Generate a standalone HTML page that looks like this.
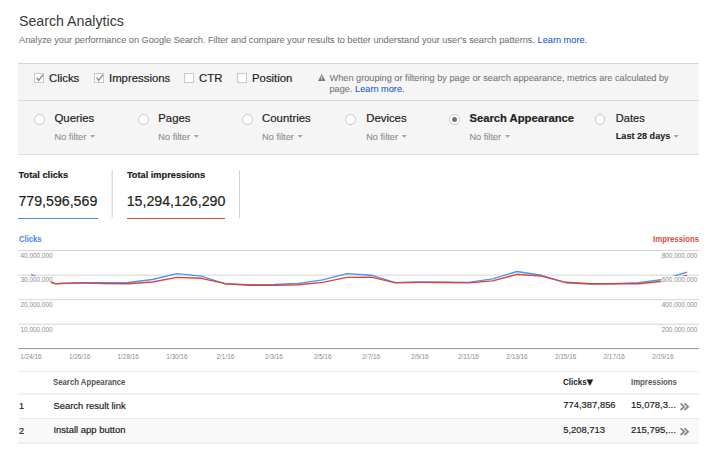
<!DOCTYPE html>
<html><head><meta charset="utf-8">
<style>
html,body{margin:0;padding:0;background:#fff;}
body{width:713px;height:470px;overflow:hidden;position:relative;font-family:"Liberation Sans",Arial,sans-serif;color:#222;}
.a{position:absolute;white-space:nowrap;line-height:1;}
.t{font-size:14.2px;color:#333;}
.sub{font-size:9.2px;color:#777;}
.lnk{color:#1958cf;}
.box{position:absolute;left:18.3px;top:62.8px;width:680.9px;height:90.5px;background:#f5f5f5;border-top:1px solid #d5d5d5;border-bottom:1px solid #e0e0e0;}
.hl{position:absolute;height:1px;background:#d8d8d8;}
.vl{position:absolute;width:1px;background:#d4d4d4;}
.lab{font-size:11.36px;color:#222;}
.nf{font-size:9.23px;color:#8a8a8a;}
.cb{position:absolute;width:8.2px;height:8.2px;border:0.8px solid #c8c8c8;background:#fff;border-radius:0.6px;}
.rd{position:absolute;width:8.8px;height:8.8px;border:0.9px solid #c6c6c6;background:#fff;border-radius:50%;}
.b{font-weight:bold;}
.lab,.t,.td{-webkit-text-stroke:0.18px currentColor;}
.sub,.nf{-webkit-text-stroke:0.08px currentColor;}
.td{font-size:9.23px;color:#222;}
.th{font-size:9.23px;font-weight:bold;color:#222;transform-origin:0 50%;transform:scaleX(0.845);}
.tri{position:absolute;width:5.2px;height:2.8px;background:#a4a4a4;clip-path:polygon(0 0,100% 0,50% 100%);}
</style></head><body>
<div class="a t" style="left:19px;top:13.6px;-webkit-text-stroke:0;color:#383838;">Search Analytics</div>
<div class="a sub" style="left:19px;top:36.1px;">Analyze your performance on Google Search. Filter and compare your results to better understand your user's search patterns. <span class="lnk">Learn more.</span></div>

<div class="box"></div>
<div class="hl" style="left:18.3px;top:99.8px;width:680.9px;"></div>

<div class="cb" style="left:34.3px;top:73.1px;"></div>
<svg class="a" style="left:34.3px;top:71.6px;" width="12" height="12" viewBox="0 0 12 12"><path d="M2.7 5.7 L4.6 8.4 L9.0 2.6" fill="none" stroke="#8c8c8c" stroke-width="1.45"/></svg>
<div class="a lab" style="left:49px;top:73px;">Clicks</div>
<div class="cb" style="left:94px;top:73.1px;"></div>
<svg class="a" style="left:94px;top:71.6px;" width="12" height="12" viewBox="0 0 12 12"><path d="M2.7 5.7 L4.6 8.4 L9.0 2.6" fill="none" stroke="#8c8c8c" stroke-width="1.45"/></svg>
<div class="a lab" style="left:109px;top:73px;">Impressions</div>
<div class="cb" style="left:184.3px;top:73.1px;"></div>
<div class="a lab" style="left:199px;top:73px;">CTR</div>
<div class="cb" style="left:237.2px;top:73.1px;"></div>
<div class="a lab" style="left:252px;top:73px;">Position</div>

<svg class="a" style="left:317.5px;top:73.7px;" width="7.5" height="7.1" viewBox="0 0 74 68"><path d="M37 0 L74 68 L0 68 Z" fill="#777"/><rect x="32" y="22" width="10" height="24" fill="#f5f5f5"/><rect x="32" y="51" width="10" height="9" fill="#f5f5f5"/></svg>
<div class="a sub" style="left:329.5px;top:72.75px;line-height:10.75px;">When grouping or filtering by page or search appearance, metrics are calculated by<br>page. <span class="lnk">Learn more.</span></div>

<div class="rd" style="left:34.2px;top:114.1px;"></div>
<div class="a lab" style="left:54.5px;top:113px;">Queries</div>
<div class="a nf" style="left:54.5px;top:132.75px;">No filter</div>
<div class="tri" style="left:90.0px;top:134.9px;"></div>

<div class="rd" style="left:138.0px;top:114.1px;"></div>
<div class="a lab" style="left:158.3px;top:113px;">Pages</div>
<div class="a nf" style="left:158.3px;top:132.75px;">No filter</div>
<div class="tri" style="left:193.8px;top:134.9px;"></div>

<div class="rd" style="left:241.8px;top:114.1px;"></div>
<div class="a lab" style="left:262.1px;top:113px;">Countries</div>
<div class="a nf" style="left:262.1px;top:132.75px;">No filter</div>
<div class="tri" style="left:297.6px;top:134.9px;"></div>

<div class="rd" style="left:345.3px;top:114.1px;"></div>
<div class="a lab" style="left:366.2px;top:113px;">Devices</div>
<div class="a nf" style="left:366.2px;top:132.75px;">No filter</div>
<div class="tri" style="left:401.7px;top:134.9px;"></div>

<div class="rd" style="left:449.0px;top:114.1px;"></div>
<div style="position:absolute;left:451.7px;top:116.8px;width:5.4px;height:5.4px;border-radius:50%;background:#707070;"></div>
<div class="a lab b" style="left:469.4px;top:113px;font-size:11.25px;">Search Appearance</div>
<div class="a nf" style="left:469.4px;top:132.75px;">No filter</div>
<div class="tri" style="left:505px;top:134.9px;"></div>

<div class="rd" style="left:594.7px;top:114.1px;"></div>
<div class="a lab" style="left:615.8px;top:113px;font-size:11.1px;">Dates</div>
<div class="a nf b" style="left:615.8px;top:131.7px;color:#222;font-size:9.08px;">Last 28 days</div>
<div class="tri" style="left:673.6px;top:134.9px;"></div>

<div class="a td b" style="left:18.6px;top:171.3px;">Total clicks</div>
<div class="a t" style="left:18.4px;top:194.2px;color:#222;">779,596,569</div>
<div class="hl" style="left:18.3px;top:217.8px;width:79.5px;background:#4d90fe;"></div>
<div class="vl" style="left:111px;top:170px;height:47.6px;width:2px;background:linear-gradient(90deg,#eee 50%,#dedede 50%);"></div>
<div class="a td b" style="left:126.9px;top:171.3px;">Total impressions</div>
<div class="a t" style="left:126.7px;top:194.2px;color:#222;">15,294,126,290</div>
<div class="hl" style="left:127px;top:217.8px;width:97.7px;background:#dd4b39;"></div>
<div class="vl" style="left:239px;top:170px;height:47.6px;"></div>

<div class="a b" style="left:18.8px;top:234.9px;font-size:8.5px;color:#4285f4;transform-origin:0 50%;transform:scaleX(0.9);">Clicks</div>
<div class="a b" style="right:13.8px;top:234.9px;font-size:8.5px;color:#dd4b39;transform-origin:100% 50%;transform:scaleX(0.92);">Impressions</div>
<svg class="a" style="left:0;top:225px;" width="713" height="145" viewBox="0 225 713 145">
<rect x="18.3" y="250.0" width="680.9" height="1" fill="#d4d4d4"/><rect x="18.3" y="274.62" width="680.9" height="1" fill="#d4d4d4"/><rect x="18.3" y="299.22" width="680.9" height="1" fill="#d4d4d4"/><rect x="18.3" y="323.7" width="680.9" height="1" fill="#d4d4d4"/>
<rect x="18.3" y="348.05" width="680.9" height="1" fill="#959595"/>
<polyline points="31.0,274.7 55.3,283.6 79.6,282.8 103.9,282.7 128.2,282.5 152.5,279.5 176.8,273.6 201.1,276.1 225.4,283.9 249.7,284.8 274.0,284.5 298.3,283.4 322.6,279.9 346.9,273.6 371.2,275.2 395.5,282.6 419.8,281.9 444.1,282.3 468.4,282.4 492.7,278.9 517.0,271.5 541.3,275.3 565.6,282.7 589.9,284.0 614.2,283.7 638.5,282.6 662.8,279.5 687.1,272.1" fill="none" stroke="#4d90fe" stroke-width="1.38" stroke-linejoin="round"/>
<polyline points="31.0,277.6 55.3,283.7 79.6,282.9 103.9,283.6 128.2,283.8 152.5,282.0 176.8,277.4 201.1,278.3 225.4,283.7 249.7,285.2 274.0,285.2 298.3,284.8 322.6,282.4 346.9,277.4 371.2,277.1 395.5,282.8 419.8,282.4 444.1,282.5 468.4,282.9 492.7,280.9 517.0,274.3 541.3,276.1 565.6,282.3 589.9,283.7 614.2,283.7 638.5,283.8 662.8,281.2 687.1,275.3" fill="none" stroke="#db4437" stroke-width="1.38" stroke-linejoin="round"/>
<g font-family="Liberation Sans, Arial, sans-serif" font-size="6.4" fill="#8a8a8a"><rect x="20" y="251.39999999999998" width="30.8" height="7.6" fill="#fff"/><text x="20.5" y="257.7">40,000,000</text><rect x="661.3" y="251.39999999999998" width="36.5" height="7.6" fill="#fff"/><text x="697.3" y="257.7" text-anchor="end">800,000,000</text><rect x="20" y="276.0" width="30.8" height="7.6" fill="#fff"/><text x="20.5" y="282.3">30,000,000</text><rect x="661.3" y="276.0" width="36.5" height="7.6" fill="#fff"/><text x="697.3" y="282.3" text-anchor="end">600,000,000</text><rect x="20" y="300.7" width="30.8" height="7.6" fill="#fff"/><text x="20.5" y="307.0">20,000,000</text><rect x="661.3" y="300.7" width="36.5" height="7.6" fill="#fff"/><text x="697.3" y="307.0" text-anchor="end">400,000,000</text><rect x="20" y="325.3" width="30.8" height="7.6" fill="#fff"/><text x="20.5" y="331.6">10,000,000</text><rect x="661.3" y="325.3" width="36.5" height="7.6" fill="#fff"/><text x="697.3" y="331.6" text-anchor="end">200,000,000</text><text x="31.0" y="358.6" text-anchor="middle">1/24/16</text><text x="79.6" y="358.6" text-anchor="middle">1/26/16</text><text x="128.2" y="358.6" text-anchor="middle">1/28/16</text><text x="176.8" y="358.6" text-anchor="middle">1/30/16</text><text x="225.4" y="358.6" text-anchor="middle">2/1/16</text><text x="274.0" y="358.6" text-anchor="middle">2/3/16</text><text x="322.6" y="358.6" text-anchor="middle">2/5/16</text><text x="371.2" y="358.6" text-anchor="middle">2/7/16</text><text x="419.8" y="358.6" text-anchor="middle">2/9/16</text><text x="468.4" y="358.6" text-anchor="middle">2/11/16</text><text x="517.0" y="358.6" text-anchor="middle">2/13/16</text><text x="565.6" y="358.6" text-anchor="middle">2/15/16</text><text x="614.2" y="358.6" text-anchor="middle">2/17/16</text><text x="662.8" y="358.6" text-anchor="middle">2/19/16</text></g>
</svg>

<div class="hl" style="left:18.3px;top:370.9px;width:680.9px;background:#ebebeb;"></div>
<div class="hl" style="left:18.3px;top:393px;height:2px;width:680.9px;background:#f2f2f2;"></div>
<div class="hl" style="left:18.3px;top:418px;width:680.9px;background:#ebebeb;"></div>
<div style="position:absolute;left:18.3px;top:419px;width:680.9px;height:23px;background:#f9f9f9;"></div>
<div class="hl" style="left:18.3px;top:442px;height:2px;width:680.9px;background:#f0f0f0;"></div>

<div class="a th" style="left:53.2px;top:377.5px;color:#555;">Search Appearance</div>
<div class="a th" style="left:563.3px;top:377.5px;transform:scaleX(0.87);">Clicks</div>
<div class="a" id="dtri" style="left:586.6px;top:377.7px;font-size:8.7px;color:#222;font-family:'DejaVu Sans','Liberation Sans',sans-serif;">▼</div>
<div class="a th" style="left:631px;top:377.5px;color:#5a5a5a;">Impressions</div>
<div class="a td" style="left:19px;top:402.1px;">1</div>
<div class="a td" style="left:53.5px;top:400.9px;font-size:9.42px;">Search result link</div>
<div class="a td" style="left:563.3px;top:400.4px;font-size:9.41px;">774,387,856</div>
<div class="a td" style="left:631px;top:400.4px;font-size:9.5px;">15,078,3...</div>
<div class="a td" style="left:19px;top:426.6px;">2</div>
<div class="a td" style="left:53.5px;top:425px;font-size:9.45px;">Install app button</div>
<div class="a td" style="left:563.3px;top:424.8px;font-size:9.4px;">5,208,713</div>
<div class="a td" style="left:631px;top:424.8px;font-size:9.5px;">215,795,...</div>
<svg class="a" style="left:680px;top:402px;" width="10" height="9" viewBox="0 0 10 9"><path d="M0.6 1.4 L4.2 4.7 L0.6 8 M4.5 1.4 L8.1 4.7 L4.5 8" fill="none" stroke="#858585" stroke-width="1.7"/></svg>
<svg class="a" style="left:680px;top:426.5px;" width="10" height="9" viewBox="0 0 10 9"><path d="M0.6 1.4 L4.2 4.7 L0.6 8 M4.5 1.4 L8.1 4.7 L4.5 8" fill="none" stroke="#858585" stroke-width="1.7"/></svg>
</body></html>
